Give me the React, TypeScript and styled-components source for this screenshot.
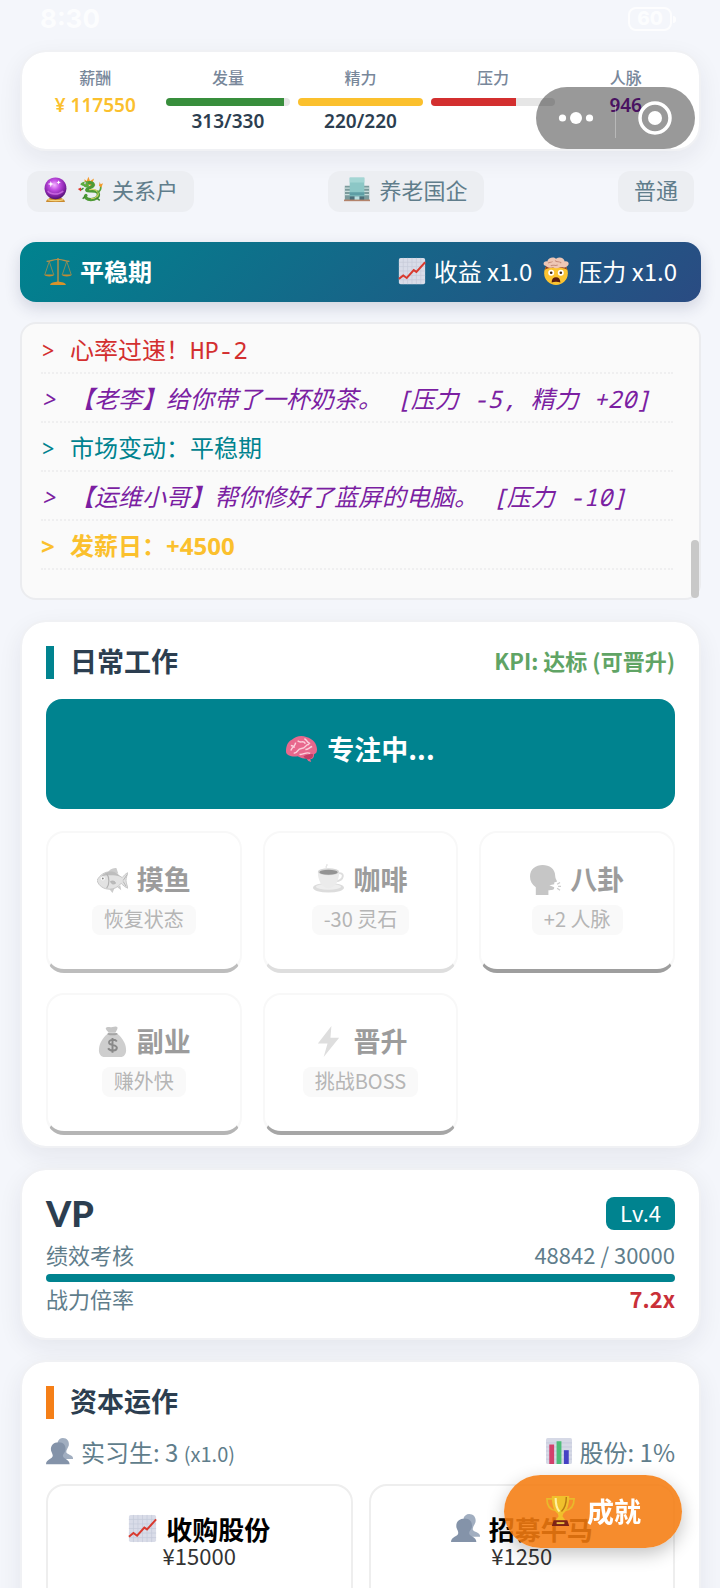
import React from "react";
import styled, { createGlobalStyle, css } from "styled-components";

const sans = `"Noto Sans CJK SC", "Noto Sans", sans-serif`;
const mono = `"Noto Sans Mono", "Liberation Mono", "Noto Sans CJK SC", monospace`;

const color = {
  bg: "#f4f6fb",
  ink: "#2c3e50",
  muted: "#607d8b",
  teal: "#00838f",
  amber: "#fbc02d",
  red: "#d32f2f",
  green: "#388e3c",
  purple: "#7b1fa2",
  orange: "#f57f17",
};

const GlobalStyle = createGlobalStyle`
  * { box-sizing: border-box; }
  body { margin: 0; background: ${color.bg}; font-family: ${sans}; color: ${color.ink}; }
  button { font-family: inherit; margin: 0; cursor: pointer; }
  h2, p, ul, dl, dd { margin: 0; padding: 0; }
`;

/* ---------- Icons ---------- */

const Svg = styled.svg<{ $size: number }>`
  width: ${(p) => p.$size}px;
  height: ${(p) => p.$size}px;
  flex: none;
  display: block;
`;

type IconProps = { size?: number };
const Icon = ({ size = 26, children }: IconProps & { children: React.ReactNode }) => (
  <Svg $size={size} viewBox="0 0 32 32" aria-hidden="true">
    {children}
  </Svg>
);

const CrystalBall = (p: IconProps) => (
  <Icon {...p}>
    <defs>
      <radialGradient id="orb" cx="45%" cy="35%" r="65%">
        <stop offset="0" stopColor="#f3b4ff" />
        <stop offset=".35" stopColor="#c44fe4" />
        <stop offset=".75" stopColor="#8423a8" />
        <stop offset="1" stopColor="#4f1270" />
      </radialGradient>
    </defs>
    <path d="M4 32c0-3 4-6 12-6s12 3 12 6z" fill="#c98a2e" />
    <path d="M6 29c4 1.600 16 1.600 20 0" stroke="#f5d27c" strokeWidth="1.500" fill="none" />
    <circle cx="16" cy="14.500" r="14" fill="url(#orb)" />
    <path d="M6 18c4 5 14 5 20 0" stroke="#e58bf5" strokeWidth="2" fill="none" opacity=".6" />
    <path d="M10 5l1 3 3 1-3 1-1 3-1-3-3-1 3-1zM20 4l.8 2 2 .8-2 .8-.8 2-.8-2-2-.8 2-.8z" fill="#fff" />
  </Icon>
);

const Dragon = (p: IconProps) => (
  <Icon {...p}>
    <path d="M9 4l3 2 2-5 2 5 5-3-2 6 4 2-4 2-9-4z" fill="#f39a2b" />
    <path
      d="M9 10c5-3 11-2 11 1s-7 3-8 6 12-1 14 4-4 8-9 8-8-3-6-5"
      stroke="#4d9a36"
      strokeWidth="4"
      strokeLinecap="round"
      fill="none"
    />
    <path d="M4 10c2-3 6-4 9-3l2 6c-3 2-6 1-7-1-2 0-3-1-4-2z" fill="#5cab3e" />
    <path d="M15 17c4-1 9-1 11 4 1 4-4 7-9 7" stroke="#d9d46a" strokeWidth="1.300" fill="none" />
    <path d="M25 20c4-1 5-4 4-9" stroke="#5aa53c" strokeWidth="2" fill="none" />
    <path d="M27 12l1-5 1 3 3-1-2 5z" fill="#f39a2b" />
    <circle cx="10" cy="9" r="1.200" fill="#fff" />
    <circle cx="10" cy="9" r=".6" fill="#222" />
    <path d="M1 16l4-2v5z" fill="#e0352b" />
    <path d="M8 15l-3 2M10 25l-3 3M24 27l4 3" stroke="#3f8530" strokeWidth="1.800" />
  </Icon>
);

const Office = (p: IconProps) => (
  <Icon {...p}>
    <path d="M1 12h7v18H1zM24 12h7v18h-7z" fill="#7b9a9c" />
    <path d="M1 15h7M1 19h7M1 23h7M24 15h7M24 19h7M24 23h7" stroke="#c9dedd" strokeWidth="1.500" />
    <path d="M7 2h18v28H7z" fill="#8cc7c6" />
    <path d="M7 2h18v6H7z" fill="#a4d6d4" />
    <path d="M7 20h18v4H7z" fill="#5e9ea5" />
    <path d="M7 25h18v5H7z" fill="#4c6f79" />
    <path d="M13 25h6v5h-6z" fill="#b9dfe0" />
    <path d="M0 30h32" stroke="#b4836b" strokeWidth="2" />
  </Icon>
);

const Scales = (p: IconProps) => (
  <Icon {...p}>
    <g stroke="#b99148" fill="none">
      <path d="M16 1v28" strokeWidth="1.600" />
      <path d="M3 5c5 0 9-3 13-2 4-1 8 2 13 2" strokeWidth="1.400" />
      <path d="M6 5L1 20M6 5l5 15M26 5l-5 15M26 5l5 15" strokeWidth=".8" />
    </g>
    <path d="M0 20h12c-1 3-11 3-12 0zM20 20h12c-1 3-11 3-12 0z" fill="#c28b33" />
    <path d="M7 32c0-3 5-3 9-4 4 1 9 1 9 4z" fill="#d8932b" />
  </Icon>
);

const ChartUp = (p: IconProps) => (
  <Icon {...p}>
    <rect x="1" y="1" width="30" height="30" rx="2" fill="#d9dce8" />
    <path
      d="M1 6h30M1 11h30M1 16h30M1 21h30M1 26h30M6 1v30M11 1v30M16 1v30M21 1v30M26 1v30"
      stroke="#c5cad9"
      strokeWidth=".8"
    />
    <path d="M1 25l5-4 4 3 8-9 3 2L31 6" stroke="#d9392e" strokeWidth="2.200" fill="none" />
  </Icon>
);

const MindBlown = (p: IconProps) => (
  <Icon {...p}>
    <circle cx="16" cy="18.500" r="13.500" fill="#fcc431" />
    <path d="M3 15c3-4 23-4 26 0l-2-5H5z" fill="#8f3b20" />
    <path
      d="M4 10c-4-1-2-6 2-5 1-4 7-6 10-3 4-3 9-1 10 3 5-1 6 4 2 6-3 2-6 0-8 1-3 2-6 0-8 0-3 1-6 0-8-2z"
      fill="#eec7b5"
    />
    <path d="M7 7c2-2 4 0 5-2M15 4c2 3 5 0 7 3M10 10c3-2 5 1 8-1" stroke="#c58d7b" strokeWidth="1.200" fill="none" />
    <circle cx="10.500" cy="18" r="3.400" fill="#fff" />
    <circle cx="21.500" cy="18" r="3.400" fill="#fff" />
    <circle cx="10.500" cy="18" r="1.500" fill="#4a2a12" />
    <circle cx="21.500" cy="18" r="1.500" fill="#4a2a12" />
    <path d="M11 29c0-4 2-6 5-6s5 2 5 6c-3-1-7-1-10 0z" fill="#5a1c10" />
  </Icon>
);

const Brain = (p: IconProps) => (
  <Icon {...p}>
    <path
      d="M0 19c0-6 2-10 6-12 4-4 10-5 15-3 7 2 11 7 11 13 0 3-1 4-3 5 0 4-2 5-4 5l1 3-3-1-2-3c-4 1-6-1-9-2-6 1-12-1-12-5z"
      fill="#e8688d"
    />
    <path
      d="M5 18c2-5 4-3 5-8M8 21c5 0 3-5 8-5s4-5 8-4M12 8c3 3 6-1 8 3M14 22c4 1 6-3 11-1M19 6c3 1 2 4 6 5M27 14c-3 1-4 3-7 3M5 13c2 0 3 1 4 2"
      stroke="#fbd0dc"
      strokeWidth="1.500"
      fill="none"
    />
    <path d="M18 24c4-2 8-3 10-2 0 3-1 5-5 5-2 0-4-1-5-3z" fill="#c33d67" />
  </Icon>
);

const Fish = (p: IconProps) => (
  <Icon {...p}>
    <path d="M11 9c2-4 6-5 9-5l2 6zM12 25l4 5 2-5zM21 24l4 3-1-5z" fill="#cccccc" />
    <path
      d="M0 17c3-6 8-9 14-9 5 0 8 4 12 6 2-2 3-4 6-5-1 3-2 5-2 8 0 2 1 5 2 8-3-1-5-3-7-5-4 4-7 6-12 6-6 0-11-3-13-9z"
      fill="#e2e2e2"
      stroke="#bcbcbc"
      strokeWidth=".8"
    />
    <path d="M4 13c3-3 6-5 10-5 4 0 7 2 10 5-6-2-14-2-20 0z" fill="#bdbdbd" />
    <path d="M10 10c3 4 3 11 0 15" stroke="#b2b2b2" strokeWidth="1.200" fill="none" />
    <path d="M14 18c3-1 5 0 5 2-2 1-4 1-5-2zM27 17l4-6M27 18l3 5" stroke="#b5b5b5" fill="#bbb" />
    <circle cx="6" cy="15" r="2" fill="#fff" />
    <circle cx="6" cy="15" r="1" fill="#888" />
  </Icon>
);

const Coffee = (p: IconProps) => (
  <Icon {...p}>
    <path d="M14 4c-2-2 2-2 0-4" stroke="#e2e2e2" strokeWidth="1.200" fill="none" />
    <ellipse cx="16" cy="24.500" rx="16" ry="5" fill="#dcdcdc" />
    <ellipse cx="16" cy="23.500" rx="13" ry="3" fill="#eee" />
    <path d="M25 10c8-3 8 7-2 8" stroke="#dedede" strokeWidth="2" fill="none" />
    <path d="M5 8h22c0 9-4 17-11 17S5 17 5 8z" fill="#ebebeb" />
    <ellipse cx="16" cy="8" rx="11" ry="3.500" fill="#d6d6d6" />
    <ellipse cx="16" cy="8.500" rx="9.500" ry="2.600" fill="#939393" />
  </Icon>
);

const SpeakingHead = (p: IconProps) => (
  <Icon {...p}>
    <path
      d="M6 32V24C2 21 0 18 0 13 0 5 6 1 13 1s13 4 13 11c0 2 1 4 2 6l-3 1v2l-5 1 5 2c0 3-2 3-6 3v5z"
      fill="#c6c6c6"
    />
    <path d="M28 21l3-2M29 23h3M28 25l3 2" stroke="#cccccc" strokeWidth="1.300" />
  </Icon>
);

const MoneyBag = (p: IconProps) => (
  <Icon {...p}>
    <path d="M9 2c2-2 4 0 7-1s6-1 5 2l-2 4h-7c-1-2-3-3-3-5z" fill="#c6c6c6" />
    <path d="M11 8h10c5 4 9 10 9 17 0 4-2 7-6 7H8c-4 0-6-3-6-7 0-7 4-13 9-17z" fill="#cecece" />
    <path d="M11 8c3 1 7 1 10 0" stroke="#a5a5a5" strokeWidth="1.600" />
    <path
      d="M20.500 16c-2-3-9-2-8 1.500 1 3 8 1.500 8 5 0 3.500-7 4-9 .5M16 12.500v15"
      stroke="#888888"
      strokeWidth="2"
      fill="none"
    />
  </Icon>
);

const Bolt = (p: IconProps) => (
  <Icon {...p}>
    <path d="M19 0L5 18h10l-4 14L27 12h-9z" fill="#dedede" />
  </Icon>
);

const People = (p: IconProps) => (
  <Icon {...p}>
    <path d="M20 0c5 0 8 4 7 9-1 3-3 5-3 8 1 3 8 3 8 7v1H14V4c1-2 3-4 6-4z" fill="#a1aec0" />
    <path
      d="M15 5c6 0 9 4 8 10-1 3-3 4-3 6 0 4 8 4 8 10H0c0-6 8-6 8-10 0-2-1-3-2-6-1-6 3-10 9-10z"
      fill="#8493a9"
    />
  </Icon>
);

const BarChart = (p: IconProps) => (
  <Icon {...p}>
    <rect width="32" height="32" rx="2" fill="#d6d9e6" />
    <path d="M0 6h32M0 11h32M0 16h32M0 21h32M0 26h32" stroke="#c3c9db" strokeWidth="1" />
    <path d="M4 8h6v24H4z" fill="#d3416c" />
    <path d="M13 4h6v28h-6z" fill="#4dbd78" />
    <path d="M22 15h6v17h-6z" fill="#4540c4" />
  </Icon>
);

const Trophy = (p: IconProps) => (
  <Icon {...p}>
    <path d="M8 4H2c0 7 3 11 9 12M24 4h6c0 7-3 11-9 12" stroke="#e9b92c" strokeWidth="1.800" fill="none" />
    <path d="M7 1h18c0 9-2 15-6 18l-1 3 3 4H11l3-4-1-3C9 16 7 10 7 1z" fill="#f0c02c" />
    <path d="M11 3c0 7 1 11 4 14" stroke="#fff0a0" strokeWidth="2.200" fill="none" />
    <path d="M22 2c0 7-2 12-5 15" stroke="#b97b14" strokeWidth="1.500" fill="none" />
    <path d="M9 26h14l2 6H7z" fill="#7e2416" />
    <path d="M12 29h8" stroke="#e9bc3d" strokeWidth="2" />
  </Icon>
);

/* ---------- Layout ---------- */

const Screen = styled.div`
  height: 100vh;
  overflow-y: auto;
  scrollbar-width: none;
  padding: 0 19px 0 20px;
`;

const Stack = styled.main`
  display: flex;
  flex-direction: column;
  gap: 20px;
`;

const cardLook = css`
  background: #fff;
  border: 2px solid #f0f1f4;
  border-radius: 26px;
  background-clip: padding-box;
  box-shadow: 0 8px 24px rgba(30, 30, 60, 0.07);
`;

const StatusBar = styled.header`
  height: 50px;
  padding: 0 29px 12px 20px;
  display: flex;
  align-items: center;
  justify-content: space-between;
  color: rgba(255, 255, 255, 0.8);
`;

const Clock = styled.span`
  font: 700 26px/38px Inter, sans-serif;
`;

const Battery = styled.span`
  position: relative;
  border: 2px solid currentColor;
  border-radius: 8px;
  width: 44px;
  height: 24px;
  font: 800 19px/20px Inter, sans-serif;
  text-align: center;
  &::after {
    content: "";
    position: absolute;
    right: -6px;
    top: 7px;
    width: 3px;
    height: 7px;
    border-radius: 0 3px 3px 0;
    background: currentColor;
  }
`;

const StatsCard = styled.section`
  ${cardLook}
  height: 101px;
  padding: 12px 11px;
  display: grid;
  grid-template-columns: repeat(5, 1fr);
  gap: 8px;
`;

const Stat = styled.div`
  display: flex;
  flex-direction: column;
  align-items: center;
`;

const StatLabel = styled.span`
  padding-bottom: 2px;
  font-size: 16px;
  line-height: 26px;
  font-weight: 500;
  color: #78879a;
`;

const StatValue = styled.strong<{ $color?: string; $gap?: number }>`
  font: 600 19px/26px "Noto Sans", "Noto Sans CJK SC", sans-serif;
  margin-top: ${(p) => p.$gap ?? 0}px;
  color: ${(p) => p.$color ?? color.ink};
`;

const Track = styled.div<{ $top?: number }>`
  width: 100%;
  height: 8px;
  margin-top: ${(p) => p.$top ?? 0}px;
  border-radius: 4px;
  background: #e6e6e6;
  overflow: hidden;
`;

const Fill = styled.div<{ $color: string }>`
  height: 100%;
  background: ${(p) => p.$color};
`;

type MeterProps = { value: number; max: number; tone: string; label: string; top?: number };
const Meter = ({ value, max, tone, label, top }: MeterProps) => (
  <Track $top={top} role="progressbar" aria-label={label} aria-valuenow={value} aria-valuemax={max}>
    <Fill $color={tone} style={{ width: `${Math.min(100, (value / max) * 100)}%` }} />
  </Track>
);

const Tags = styled.div`
  display: flex;
  justify-content: space-between;
  padding: 0 7px 10px;
`;

const Tag = styled.span`
  display: flex;
  align-items: center;
  gap: 9px;
  height: 41px;
  padding: 0 16px 5px;
  border-radius: 12px;
  background: #eceef2;
  color: ${color.muted};
  font-size: 22px;
  line-height: 32px;
`;

const Banner = styled.section`
  display: flex;
  align-items: center;
  justify-content: space-between;
  height: 60px;
  padding: 0 24px 3px;
  border-radius: 16px;
  background: linear-gradient(135deg, ${color.teal}, #2a4b82);
  box-shadow: 0 6px 16px rgba(30, 40, 80, 0.16);
  color: #fff;
  font-size: 24px;
  line-height: 36px;
`;

const IconText = styled.span<{ $bold?: boolean }>`
  display: flex;
  align-items: center;
  gap: 8px;
  font-weight: ${(p) => (p.$bold ? 700 : 400)};
`;

const BannerEffects = styled.div`
  display: flex;
  gap: 10px;
`;

const LogBox = styled.section`
  position: relative;
  height: 278px;
  padding: 1px 26px 0 19px;
  border: 2px solid #ebecef;
  border-radius: 16px;
  background: #fafafa;
`;

const LogList = styled.ul`
  list-style: none;
`;

const LogLine = styled.li<{ $tone: string; $italic?: boolean; $bold?: boolean }>`
  height: 49px;
  border-bottom: 2px dotted #efeff0;
  font-family: ${(p) => (p.$bold ? `"Noto Sans", ${sans}` : mono)};
  font-size: 24px;
  line-height: 50px;
  white-space: nowrap;
  color: ${(p) => p.$tone};
  font-style: ${(p) => (p.$italic ? "italic" : "normal")};
  font-weight: ${(p) => (p.$bold ? 700 : 400)};
`;

const Prompt = styled.span`
  display: inline-block;
  width: 29px;
`;

const ScrollThumb = styled.div`
  position: absolute;
  right: 0;
  bottom: 0;
  width: 8px;
  height: 58px;
  border-radius: 4px;
  background: #c8c8c8;
`;

const Card = styled.section<{ $bottom: number }>`
  ${cardLook}
  padding: 22px 24px ${(p) => p.$bottom}px;
`;

const CardHeader = styled.div`
  display: flex;
  align-items: center;
  justify-content: space-between;
  height: 36px;
`;

const CardTitle = styled.h2<{ $accent: string }>`
  border-left: 8px solid ${(p) => p.$accent};
  padding: 0 0 4px 16px;
  font-size: 27px;
  line-height: 29px;
  font-weight: 700;
`;

const Kpi = styled.span`
  padding-bottom: 4px;
  font-size: 22px;
  font-weight: 700;
  color: #60a465;
`;

const FocusButton = styled.button`
  display: flex;
  justify-content: center;
  align-items: center;
  gap: 10px;
  width: 100%;
  height: 110px;
  margin: 19px 0 22px;
  padding: 0 0 11px;
  border: 0;
  border-radius: 16px;
  background: ${color.teal};
  color: #fff;
  font-size: 27px;
  font-weight: 700;
`;

const ActionGrid = styled.div<{ $cols: number; $gap: number }>`
  display: grid;
  grid-template-columns: repeat(${(p) => p.$cols}, 1fr);
  gap: 20px ${(p) => p.$gap}px;
`;

const tileLook = css`
  display: flex;
  flex-direction: column;
  align-items: center;
  height: 142px;
  border-radius: 18px;
  background: #fff;
`;

const ActionTile = styled.button<{ $edge: string }>`
  ${tileLook}
  padding: 27px 0 0;
  border: 2px solid #f8f8f8;
  border-bottom: 4px solid ${(p) => p.$edge};
  color: #9c9c9c;
`;

const TileTitle = styled.span`
  display: flex;
  align-items: center;
  gap: 9px;
  font-size: 27px;
  line-height: 38px;
  font-weight: 700;
`;

const TileNote = styled.span`
  margin-top: 7px;
  padding: 0 12px 2px;
  border-radius: 8px;
  background: #f9f9f9;
  color: #b5b5b5;
  font-size: 20px;
  line-height: 28px;
`;

const RankRow = styled.div`
  display: flex;
  align-items: center;
  justify-content: space-between;
  height: 46px;
  padding-bottom: 4px;
`;

const Rank = styled.h2`
  font: 900 36px/42px Lato, sans-serif;
`;

const LevelBadge = styled.span`
  padding: 0 14px 3px;
  border-radius: 8px;
  background: ${color.teal};
  color: #fff;
  font-size: 22px;
  line-height: 30px;
`;

const Line = styled.div`
  display: flex;
  align-items: center;
  justify-content: space-between;
  height: 36px;
  padding-bottom: 4px;
  color: ${color.muted};
  font-size: 22px;
`;

const Power = styled.strong`
  color: #c93038;
`;

const AssetRow = styled(Line)`
  margin: 15px 0 13px;
  font-size: 24px;
`;

const Small = styled.span`
  font-size: 20px;
`;

const AssetButton = styled.button`
  ${tileLook}
  padding: 28px 0 0;
  border: 2px solid #eeeeee;
  color: #000;
`;

const AssetTitle = styled(TileTitle)`
  font-size: 26px;
  line-height: 28px;
`;

const Price = styled.span`
  font-size: 22px;
  line-height: 24px;
  color: #333;
`;

/* ---------- Floating controls ---------- */

const Capsule = styled.div`
  position: fixed;
  top: 87px;
  right: 25px;
  display: flex;
  align-items: center;
  width: 159px;
  height: 62px;
  border-radius: 31px;
  background: rgba(0, 0, 0, 0.4);
  &::after {
    content: "";
    position: absolute;
    left: 79px;
    top: 17px;
    width: 1px;
    height: 34px;
    background: rgba(255, 255, 255, 0.3);
  }
`;

const CapsuleButton = styled.button`
  flex: 1;
  height: 100%;
  padding: 0;
  border: 0;
  background: none;
  display: flex;
  align-items: center;
  justify-content: center;
`;

const CapsuleIcon = styled.svg`
  width: 36px;
  height: 36px;
`;

const AchievementButton = styled.button`
  position: fixed;
  right: 38px;
  bottom: 40px;
  display: flex;
  align-items: center;
  justify-content: center;
  gap: 11px;
  width: 178px;
  height: 73px;
  padding: 0 0 3px;
  border: 0;
  border-radius: 37px;
  background: rgba(245, 124, 16, 0.88);
  box-shadow: 0 6px 18px rgba(0, 0, 0, 0.24);
  color: #fff;
  font-size: 27px;
  font-weight: 700;
`;

/* ---------- Data ---------- */

const log = [
  { text: "心率过速！HP-2", tone: color.red },
  { text: "【老李】给你带了一杯奶茶。 [压力 -5, 精力 +20]", tone: color.purple, italic: true },
  { text: "市场变动：平稳期", tone: color.teal },
  { text: "【运维小哥】帮你修好了蓝屏的电脑。 [压力 -10]", tone: color.purple, italic: true },
  { text: "发薪日：+4500", tone: color.amber, bold: true },
];

const actions = [
  { icon: Fish, title: "摸鱼", note: "恢复状态", edge: "#bdbdbd" },
  { icon: Coffee, title: "咖啡", note: "-30 灵石", edge: "#dedede" },
  { icon: SpeakingHead, title: "八卦", note: "+2 人脉", edge: "#9e9e9e" },
  { icon: MoneyBag, title: "副业", note: "赚外快", edge: "#b5b5b5" },
  { icon: Bolt, title: "晋升", note: "挑战BOSS", edge: "#a6a6a6" },
];

export default function App() {
  return (
    <>
      <GlobalStyle />
      <Screen>
        <StatusBar>
          <Clock>8:30</Clock>
          <Battery>60</Battery>
        </StatusBar>
        <Stack>
          <StatsCard>
            <Stat>
              <StatLabel>薪酬</StatLabel>
              <StatValue $color={color.amber}>¥ 117550</StatValue>
            </Stat>
            <Stat>
              <StatLabel>发量</StatLabel>
              <Meter label="发量" value={313} max={330} tone={color.green} top={6} />
              <StatValue $gap={2}>313/330</StatValue>
            </Stat>
            <Stat>
              <StatLabel>精力</StatLabel>
              <Meter label="精力" value={220} max={220} tone={color.amber} top={6} />
              <StatValue $gap={2}>220/220</StatValue>
            </Stat>
            <Stat>
              <StatLabel>压力</StatLabel>
              <Meter label="压力" value={68} max={100} tone={color.red} top={6} />
            </Stat>
            <Stat>
              <StatLabel>人脉</StatLabel>
              <StatValue $color={color.purple}>946</StatValue>
            </Stat>
          </StatsCard>

          <Tags>
            <Tag>
              <CrystalBall size={25} />
              <Dragon size={26} />
              关系户
            </Tag>
            <Tag>
              <Office size={26} />
              养老国企
            </Tag>
            <Tag>普通</Tag>
          </Tags>

          <Banner>
            <IconText $bold>
              <Scales size={28} />
              平稳期
            </IconText>
            <BannerEffects>
              <IconText>
                <ChartUp size={28} />
                收益 x1.0
              </IconText>
              <IconText>
                <MindBlown size={28} />
                压力 x1.0
              </IconText>
            </BannerEffects>
          </Banner>

          <LogBox>
            <LogList>
              {log.map((l) => (
                <LogLine key={l.text} $tone={l.tone} $italic={l.italic} $bold={l.bold}>
                  <Prompt>&gt;</Prompt>
                  {l.text}
                </LogLine>
              ))}
            </LogList>
            <ScrollThumb />
          </LogBox>

          <Card $bottom={11}>
            <CardHeader>
              <CardTitle $accent={color.teal}>日常工作</CardTitle>
              <Kpi>KPI: 达标 (可晋升)</Kpi>
            </CardHeader>
            <FocusButton>
              <Brain size={31} />
              专注中...
            </FocusButton>
            <ActionGrid $cols={3} $gap={21}>
              {actions.map(({ icon: Glyph, title, note, edge }) => (
                <ActionTile key={title} $edge={edge}>
                  <TileTitle>
                    <Glyph size={31} />
                    {title}
                  </TileTitle>
                  <TileNote>{note}</TileNote>
                </ActionTile>
              ))}
            </ActionGrid>
          </Card>

          <Card $bottom={20}>
            <RankRow>
              <Rank>VP</Rank>
              <LevelBadge>Lv.4</LevelBadge>
            </RankRow>
            <Line>
              <span>绩效考核</span>
              <span>48842 / 30000</span>
            </Line>
            <Meter label="绩效考核" value={48842} max={30000} tone={color.teal} />
            <Line>
              <span>战力倍率</span>
              <Power>7.2x</Power>
            </Line>
          </Card>

          <Card $bottom={24}>
            <CardHeader>
              <CardTitle $accent={color.orange}>资本运作</CardTitle>
            </CardHeader>
            <AssetRow>
              <IconText>
                <People size={27} />
                <span>
                  实习生: 3 <Small>(x1.0)</Small>
                </span>
              </IconText>
              <IconText>
                <BarChart size={26} />
                股份: 1%
              </IconText>
            </AssetRow>
            <ActionGrid $cols={2} $gap={16}>
              <AssetButton>
                <AssetTitle>
                  <ChartUp size={29} />
                  收购股份
                </AssetTitle>
                <Price>¥15000</Price>
              </AssetButton>
              <AssetButton>
                <AssetTitle>
                  <People size={29} />
                  招募牛马
                </AssetTitle>
                <Price>¥1250</Price>
              </AssetButton>
            </ActionGrid>
          </Card>
        </Stack>
      </Screen>

      <Capsule>
        <CapsuleButton aria-label="更多">
          <CapsuleIcon viewBox="0 0 36 36" fill="#fff">
            <circle cx="4.500" cy="18" r="3.600" />
            <circle cx="18" cy="18" r="6" />
            <circle cx="31.500" cy="18" r="3.600" />
          </CapsuleIcon>
        </CapsuleButton>
        <CapsuleButton aria-label="关闭">
          <CapsuleIcon viewBox="0 0 36 36" fill="#fff">
            <circle cx="18" cy="18" r="15" fill="none" stroke="#fff" strokeWidth="3.500" />
            <circle cx="18" cy="18" r="7" />
          </CapsuleIcon>
        </CapsuleButton>
      </Capsule>

      <AchievementButton>
        <Trophy size={31} />
        成就
      </AchievementButton>
    </>
  );
}
